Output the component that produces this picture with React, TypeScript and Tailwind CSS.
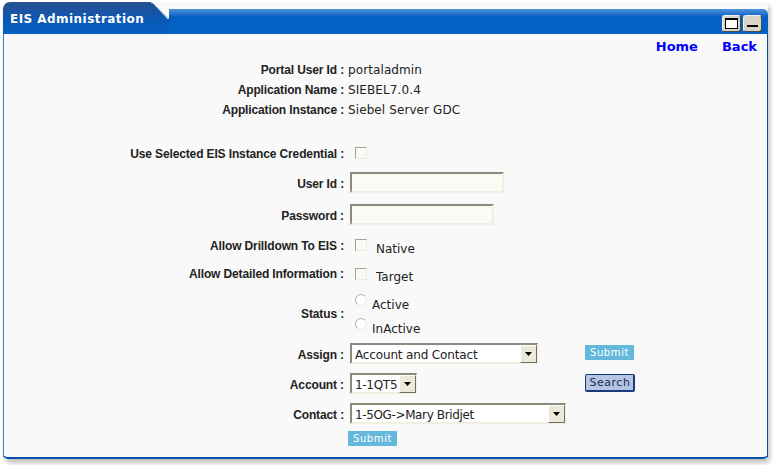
import React from 'react';

const labelFont = "font-['Liberation_Sans',Arial,sans-serif] font-bold text-[12px] text-[#222] tracking-[-0.13px]";
const valueFont = "font-['DejaVu_Sans',Verdana,sans-serif] text-[12px] text-[#222]";

const Row: React.FC<{ label: string; className: string; drop?: boolean; children?: React.ReactNode }> = ({ label, className, drop = true, children }) => (
    <div className={`flex items-center ${className}`}>
        <div className={`w-[341px] text-right whitespace-pre ${drop ? 'pt-[2px]' : ''} ${labelFont}`}>{label}</div>
        {children}
    </div>
);

const Check = () => <span className="block w-[12px] h-[12px] border border-[#a5a294] border-r-[#eeeadd] border-b-[#eeeadd] bg-[#fbfbf6]" />;

const Radio = () => <span className="block w-[12px] h-[12px] mt-[1px] rounded-full border border-[#b5b2a6] border-r-[#ece9dc] border-b-[#ece9dc] bg-white" />;

const Select: React.FC<{ value: string; className: string; textClass: string }> = ({ value, className, textClass }) => (
    <div className={`flex items-center h-[21px] border-2 border-r border-[#8d8a7e] border-r-[#f1efe4] border-b-[#f1efe4] bg-white ${className}`}>
        <span className={`flex-1 pl-[3px] pt-[2px] whitespace-nowrap overflow-hidden ${valueFont} ${textClass}`}>{value}</span>
        <span className="flex items-center justify-center w-[17px] h-[18px] bg-[#ece9d8] border border-[#fff] border-r-[#716f64] border-b-[#716f64]">
            <svg width="7" height="4" viewBox="0 0 7 4"><path d="M0 0h7L3.5 4z" fill="#000" /></svg>
        </span>
    </div>
);

const SubmitBtn = ({ className = '' }: { className?: string }) => (
    <button className={`w-[49px] h-[15px] rounded-[1px] bg-[#63b8dc] text-white text-[10px] tracking-[0.6px] leading-none font-['DejaVu_Sans',Verdana,sans-serif] ${className}`}>
        Submit
    </button>
);

const WinBtn: React.FC<{ children: React.ReactNode }> = ({ children }) => (
    <span className="flex items-center justify-center w-[19px] h-[17px] rounded-[3px] bg-[#d8d4c8] border border-[#f4f2ea] border-r-[#4a4a44] border-b-[#4a4a44]">
        {children}
    </span>
);

export default function App() {
    return (
        <div className="w-[775px] h-[465px] bg-white pl-[3px] pt-[2px] overflow-hidden">
            <div className="w-[765px] h-[457px] flex flex-col rounded-b-[5px] bg-[#f9f9f9] border-b-2 border-[#0a50a8] shadow-[2px_4px_5px_rgba(0,0,0,0.25)]">
                <div className="flex h-[32px] shrink-0">
                    <div className="w-[146px] rounded-tl-[7px] bg-gradient-to-b from-[#27508f] via-[#0a57b0] to-[#0560c4] pl-[7px] pt-[10px] text-white font-bold text-[12px] leading-[15px] tracking-[0.45px] font-['DejaVu_Sans',Verdana,sans-serif] whitespace-nowrap">
                        EIS Administration
                    </div>
                    <svg width="20" height="32" viewBox="0 0 20 32" className="shrink-0 block">
                        <defs>
                            <linearGradient id="tabFill" x1="0" y1="0" x2="0" y2="1">
                                <stop offset="0" stopColor="#27508f" />
                                <stop offset="0.5" stopColor="#0a57b0" />
                                <stop offset="1" stopColor="#0560c4" />
                            </linearGradient>
                        </defs>
                        <path d="M0 0h1q2 0 4 2l15 15v15H0z" fill="url(#tabFill)" />
                        <path d="M2 0.5q2 0 3.5 2L19 17" stroke="#dfe9f6" strokeWidth="1" fill="none" />
                    </svg>
                    <div className="flex-1 mt-[7px] rounded-tr-[5px] bg-gradient-to-b from-[#4d94d8] via-[#0560c4] via-30% to-[#0560c4] flex justify-end items-center gap-[2px] pr-[6px] pt-[3px]">
                        <WinBtn><span className="block w-[13px] h-[11px] border border-black border-t-2 bg-white" /></WinBtn>
                        <WinBtn><span className="block w-[11px] h-[2px] mt-[5px] bg-black" /></WinBtn>
                    </div>
                </div>
                <div className="flex-1 border-l border-[#3d7cc4] border-r border-r-[#0a50a8]">
                    <div className="flex justify-end gap-[24px] pr-[10px] pt-[5px] h-[21px] text-[#0000ff] text-[13px] leading-[16px] font-bold font-['DejaVu_Sans',Verdana,sans-serif]">
                        <span>Home</span>
                        <span>Back</span>
                    </div>
                    <div className="-ml-[1px]">
                        <Row label="Portal User Id :" drop={false} className="h-[20px] mt-[5px]"><span className={`ml-[4px] tracking-[0.1px] ${valueFont}`}>portaladmin</span></Row>
                        <Row label="Application Name :" drop={false} className="h-[20px]"><span className={`ml-[4px] tracking-[0.1px] ${valueFont}`}>SIEBEL7.0.4</span></Row>
                        <Row label="Application Instance :" drop={false} className="h-[20px]"><span className={`ml-[4px] tracking-[0.1px] ${valueFont}`}>Siebel Server GDC</span></Row>
                        <Row label="Use Selected EIS Instance Credential :" className="h-[20px] mt-[23px]"><span className="ml-[11px]"><Check /></span></Row>
                        <Row label="User Id :" className="h-[21px] mt-[9px]"><span className="block ml-[6px] w-[154px] h-[21px] border-2 border-[#8d8a7e] border-r-[#f1efe4] border-b-[#f1efe4] bg-[#fbfbf6]" /></Row>
                        <Row label="Password :" className="h-[21px] mt-[11px]"><span className="block ml-[6px] w-[144px] h-[21px] border-2 border-[#8d8a7e] border-r-[#f1efe4] border-b-[#f1efe4] bg-[#fbfbf6]" /></Row>
                        <Row label="Allow Drilldown To EIS :" className="h-[20px] mt-[10px]">
                            <span className="ml-[11px]"><Check /></span>
                            <span className={`ml-[9px] mt-[8px] ${valueFont}`}>Native</span>
                        </Row>
                        <Row label="Allow Detailed Information :" className="h-[20px] mt-[8px]">
                            <span className="ml-[11px] mt-[2px]"><Check /></span>
                            <span className={`ml-[9px] mt-[8px] ${valueFont}`}>Target</span>
                        </Row>
                        <Row label="Status :" drop={false} className="h-[42px] mt-[10px]">
                            <div className="ml-[11px] flex flex-col">
                                <div className="flex h-[24px]"><Radio /><span className={`ml-[5px] mt-[3px] ${valueFont}`}>Active</span></div>
                                <div className="flex h-[18px]"><Radio /><span className={`ml-[5px] mt-[3px] ${valueFont}`}>InActive</span></div>
                            </div>
                        </Row>
                        <Row label="Assign :" className="h-[21px] mt-[8px]">
                            <Select value="Account and Contact" textClass="tracking-[-0.15px]" className="ml-[6px] w-[188px]" />
                            <SubmitBtn className="ml-[47px] -mt-[2px]" />
                        </Row>
                        <Row label="Account :" className="h-[21px] mt-[9px]">
                            <Select value="1-1QT5" textClass="tracking-[-0.3px]" className="ml-[6px] w-[67px]" />
                            <button className="ml-[168px] -mt-[2px] pl-[1px] w-[50px] h-[18px] rounded-[2px] bg-[#b4c6e4] border border-[#1a3a78] border-r-2 border-b-2 text-[#1a2a50] text-[11px] leading-none tracking-[0.5px] font-['DejaVu_Sans',Verdana,sans-serif]">Search</button>
                        </Row>
                        <Row label="Contact :" className="h-[21px] mt-[9px]">
                            <Select value="1-5OG->Mary Bridjet" textClass="tracking-[-0.37px]" className="ml-[6px] w-[216px]" />
                        </Row>
                        <div className="pl-[345px] mt-[7px] flex"><SubmitBtn /></div>
                    </div>
                </div>
            </div>
        </div>
    );
}
